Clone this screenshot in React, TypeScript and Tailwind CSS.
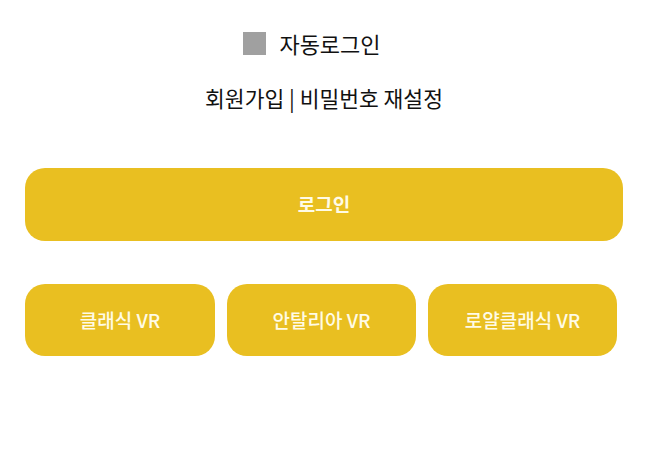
import React from "react";

export default function App() {
  const font = { fontFamily: '"Noto Sans CJK KR", "Noto Sans", sans-serif' };
  return (
    <div className="w-[648px] h-[472px] bg-white" style={font}>
      <div className="pt-[32px] flex items-center justify-center pr-[24px]">
        <div className="w-[23px] h-[23px] bg-[#a0a0a0]" />
        <span className="ml-[13px] text-[22px] leading-[23px] text-[#111]">자동로그인</span>
      </div>
      <div className="mt-[28px] h-[30px] flex items-center justify-center text-[21.5px] text-[#111]">
        회원가입 | 비밀번호 재설정
      </div>
      <div className="px-[25px]">
        <button className="mt-[55px] w-full h-[73px] rounded-[20px] bg-[#e9bf21] text-[#fffbe6] text-[19px] font-bold flex items-center justify-center">
          로그인
        </button>
        <div className="mt-[43px] flex gap-[12px]">
          <button className="w-[190px] h-[72px] rounded-[20px] bg-[#e9bf21] text-[#fffbe6] text-[19px] font-medium flex items-center justify-center">
            클래식 VR
          </button>
          <button className="w-[189px] h-[72px] rounded-[20px] bg-[#e9bf21] text-[#fffbe6] text-[19px] font-medium flex items-center justify-center">
            안탈리아 VR
          </button>
          <button className="w-[189px] h-[72px] rounded-[20px] bg-[#e9bf21] text-[#fffbe6] text-[19px] font-medium flex items-center justify-center">
            로얄클래식 VR
          </button>
        </div>
      </div>
    </div>
  );
}
